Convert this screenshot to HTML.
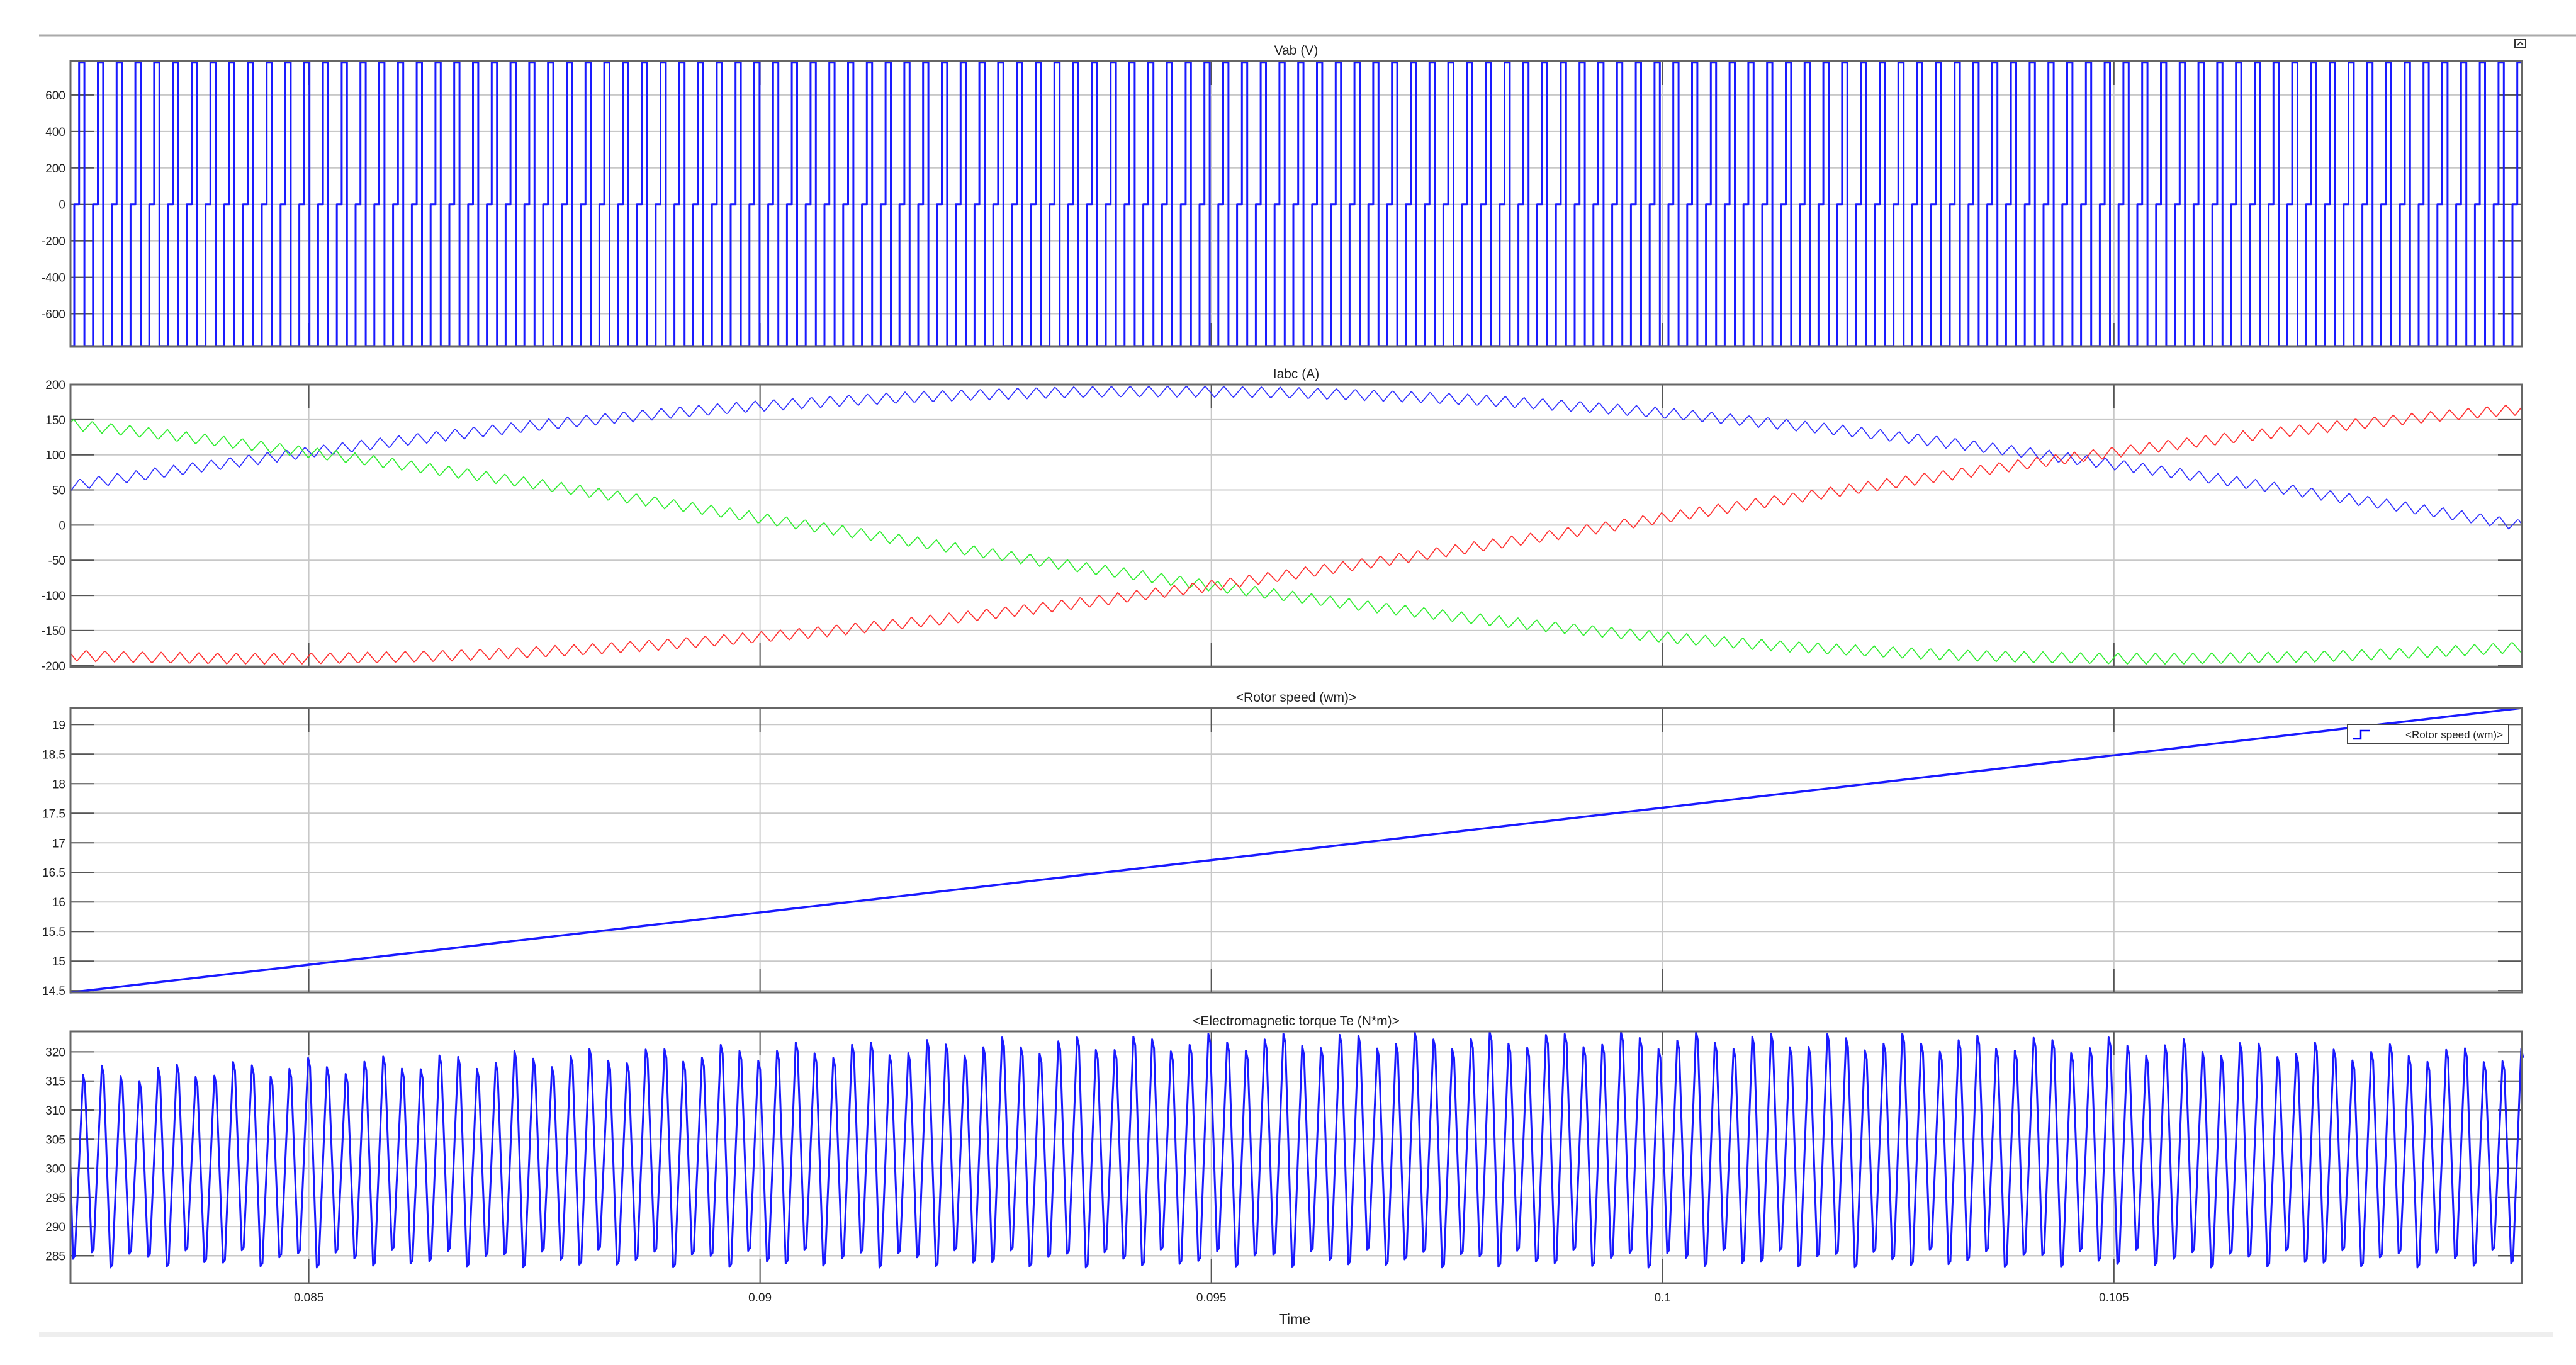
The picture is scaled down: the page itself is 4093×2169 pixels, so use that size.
<!DOCTYPE html>
<html><head><meta charset="utf-8">
<style>
html,body{margin:0;padding:0;background:#fff;}
body{width:4093px;height:2169px;overflow:hidden;position:relative;font-family:"Liberation Sans",sans-serif;}
svg{position:absolute;left:0;top:0;}
</style></head>
<body>
<svg id="s" width="4093" height="2169" xmlns="http://www.w3.org/2000/svg" font-family="Liberation Sans, sans-serif">
<line x1="62" y1="56" x2="4093" y2="56" stroke="#aaa" stroke-width="3"/>
<rect x="62" y="2117" width="3995" height="8" fill="#eeeeee"/>
<rect x="3996" y="63" width="17" height="13" fill="#fff" stroke="#333" stroke-width="2"/>
<path d="M4000 72 L4004.5 67 L4009 72" fill="none" stroke="#333" stroke-width="2"/>
</svg>
<script>
var S=document.getElementById('s'),NS='http://www.w3.org/2000/svg';
function el(t,a,txt){var e=document.createElementNS(NS,t);for(var k in a)e.setAttribute(k,a[k]);if(txt!==undefined)e.textContent=txt;S.appendChild(e);return e;}
var L=112,R=4007,T0=0.08236,T1=0.10952;
function X(t){return L+(t-T0)/(T1-T0)*(R-L);}
var xt=[0.085,0.09,0.095,0.1,0.105],xl=['0.085','0.09','0.095','0.1','0.105'];
function plot(top,bot,vmin,vmax,ticks,labels,title,vgrid){
  function Y(v){return bot-(v-vmin)/(vmax-vmin)*(bot-top);}
  el('rect',{x:L,y:top,width:R-L,height:bot-top,fill:'#fff'});
  ticks.forEach(function(v,i){var y=Y(v);
    el('line',{x1:L,y1:y,x2:R,y2:y,stroke:'#c8c8c8','stroke-width':2});
    el('line',{x1:L,y1:y,x2:L+38,y2:y,stroke:'#555','stroke-width':2});
    el('line',{x1:R-38,y1:y,x2:R,y2:y,stroke:'#555','stroke-width':2});
    el('text',{x:L-8,y:y+7,'text-anchor':'end','font-size':19,fill:'#222'},labels[i]);});
  if(vgrid)xt.forEach(function(t){var x=X(t);
    el('line',{x1:x,y1:top,x2:x,y2:bot,stroke:'#c8c8c8','stroke-width':2});
    el('line',{x1:x,y1:top,x2:x,y2:top+38,stroke:'#555','stroke-width':2});
    el('line',{x1:x,y1:bot-38,x2:x,y2:bot,stroke:'#555','stroke-width':2});});
  el('text',{x:(L+R)/2,y:top-10,'text-anchor':'middle','font-size':21,fill:'#222'},title);
  return Y;
}
function border(top,bot){el('rect',{x:L,y:top,width:R-L,height:bot-top,fill:'none',stroke:'#666','stroke-width':3});}
function line(pts,col,w){el('polyline',{points:pts.join(' '),fill:'none',stroke:col,'stroke-width':w,'stroke-linejoin':'round'});}
var P=29.8;
var Y1=plot(97,551,-781,786,[-600,-400,-200,0,200,400,600],['-600','-400','-200','0','200','400','600'],'Vab (V)',true);
var pts=[],hi=Y1(780),lo=Y1(-780),z=Y1(0);
pts.push(L+','+lo);
var x0=L+6;
pts.push(x0+','+lo);
for(var k=0;;k++){var b=x0+k*P;if(b>R)break;
  var a1=b,a2=b+7.7,a3=b+16.1;
  pts.push(a1+','+lo,a1+','+z,Math.min(a2,R)+','+z);if(a2>R)break;
  pts.push(a2+','+hi,Math.min(a3,R)+','+hi);if(a3>R)break;
  pts.push(a3+','+lo,Math.min(b+P,R)+','+lo);}
line(pts,'#1a1aff',3);border(97,551);
var Y2=plot(611,1060,-202,200,[-200,-150,-100,-50,0,50,100,150,200],['-200','-150','-100','-50','0','50','100','150','200'],'Iabc (A)',true);
function tri(x,ph){var u=((x-L)/P+ph)%1;if(u<0)u+=1;return u<0.5?(4*u-1):(3-4*u);}
var cols=['#3333ff','#33ee33','#ff3333'],offs=[0,114,240];
for(var c=0;c<3;c++){var p=[];for(var xx=L;xx<=R;xx+=2){var t=T0+(xx-L)/(R-L)*(T1-T0);
  var v=190*Math.cos(2*Math.PI*(t-0.0945)/0.06+offs[c]*Math.PI/180)+8*tri(xx,c*0.33);
  p.push(xx+','+Y2(v).toFixed(1));}line(p,cols[c],1.7);}
border(611,1060);
var Y3=plot(1125,1577,14.47,19.28,[14.5,15,15.5,16,16.5,17,17.5,18,18.5,19],['14.5','15','15.5','16','16.5','17','17.5','18','18.5','19'],'<Rotor speed (wm)>',true);
line([L+','+Y3(14.47),R+','+Y3(19.28)],'#1a1aff',3.5);
el('rect',{x:3730,y:1151,width:256,height:31,fill:'#fff',stroke:'#444','stroke-width':2});
el('path',{d:'M3739 1174 L3751 1174 L3751 1161 L3765 1161',fill:'none',stroke:'#0000ff','stroke-width':2.5});
el('text',{x:3977,y:1173,'text-anchor':'end','font-size':17,fill:'#222'},'<Rotor speed (wm)>');
border(1125,1577);
var Y4=plot(1639,2039,280.3,323.5,[285,290,295,300,305,310,315,320],['285','290','295','300','305','310','315','320'],'<Electromagnetic torque Te (N*m)>',true);
var q=[L+','+Y4(300)];
for(var k=0;;k++){var b=L+4+k*P;if(b>R)break;var f=(b-L)/(R-L);
  var pk=316+6*Math.sin(f*2.6)+1.5*Math.sin(k*1.7),lw=284.5+1.5*Math.sin(k*2.3);
  q.push(b+','+Y4(lw),(b+3)+','+Y4(lw+0.5),(b+16)+','+Y4(pk),(b+19)+','+Y4(pk-1.5));}
line(q,'#1a1aff',3);
border(1639,2039);
xt.forEach(function(t,i){el('text',{x:X(t),y:2068,'text-anchor':'middle','font-size':19,fill:'#222'},xl[i]);});
el('text',{x:2057,y:2104,'text-anchor':'middle','font-size':23,fill:'#222'},'Time');
</script>
</body></html>
